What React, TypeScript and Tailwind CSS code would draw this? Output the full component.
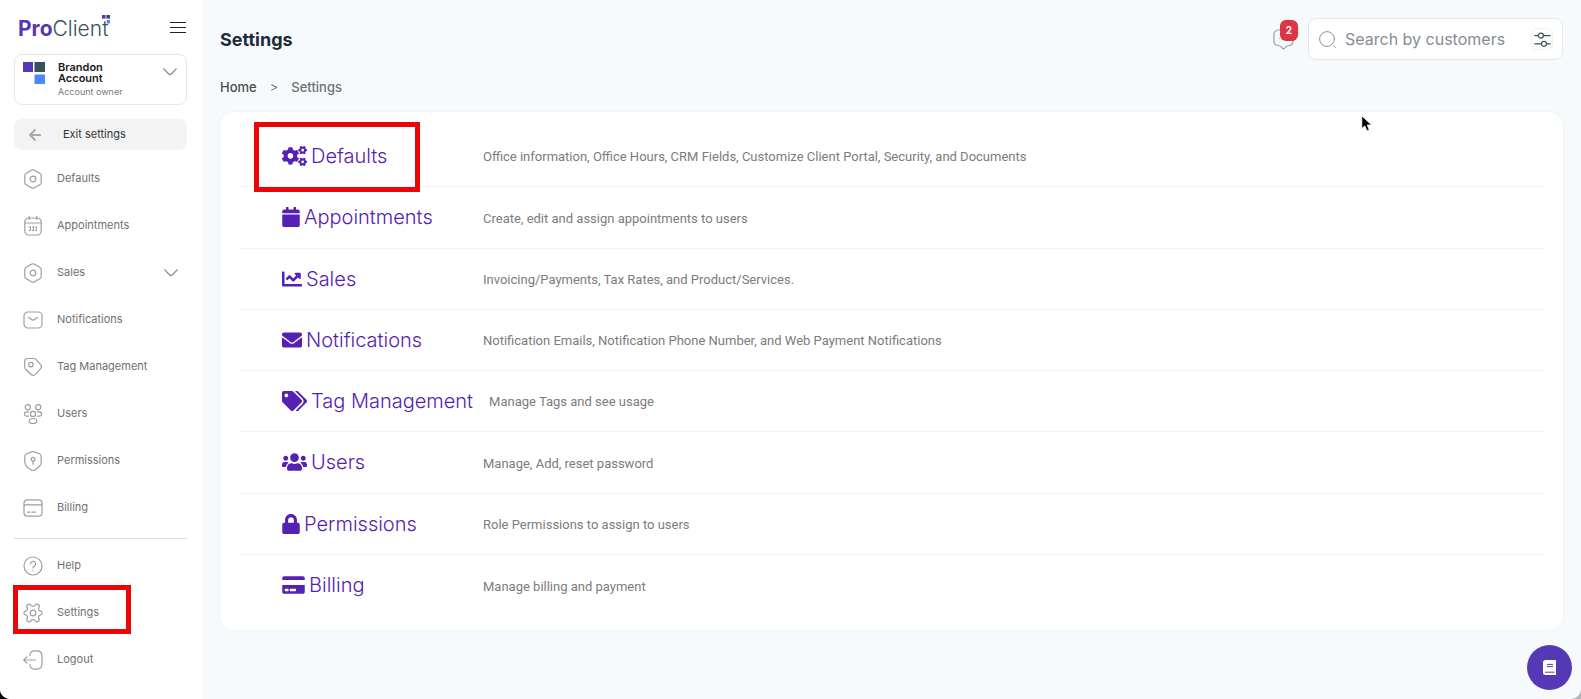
import React from 'react';
import {
  FaCogs,
  FaCalendar,
  FaChartLine,
  FaEnvelope,
  FaTags,
  FaUsers,
  FaLock,
  FaCreditCard,
} from 'react-icons/fa';
import type { IconType } from 'react-icons';
import { clsx } from 'clsx';

interface NavItem {
  label: string;
  icon: React.ReactNode;
  expandable?: boolean;
  highlighted?: boolean;
}

interface SettingRow {
  label: string;
  description: string;
  icon: IconType;
  iconWidth: string;
  highlighted?: boolean;
}

const LineIcon: React.FC<{ children: React.ReactNode }> = ({ children }) => (
  <svg
    viewBox="0 0 20 20"
    className="w-5 h-5 shrink-0"
    fill="none"
    stroke="currentColor"
    strokeWidth="1.2"
    strokeLinecap="round"
    strokeLinejoin="round"
    aria-hidden="true"
  >
    {children}
  </svg>
);

const HexagonIcon = () => (
  <LineIcon>
    <path d="M8.9 1.1a2.2 2.2 0 0 1 2.2 0l6 3.4a2 2 0 0 1 1.1 1.8v7.4a2 2 0 0 1-1.1 1.8l-6 3.4a2.2 2.2 0 0 1-2.2 0l-6-3.4a2 2 0 0 1-1.1-1.8V6.3a2 2 0 0 1 1.1-1.8z" />
    <circle cx="10" cy="10" r="2.8" />
  </LineIcon>
);

const CalendarIcon = () => (
  <LineIcon>
    <path d="M5.5 2h9a3.7 3.7 0 0 1 3.7 3.7V15a4 4 0 0 1-4 4H5.8a4 4 0 0 1-4-4V5.7A3.7 3.7 0 0 1 5.5 2zM1.8 7h16.4M6.2.5v3M13.8.5v3" />
    <path d="M6 11h1.5M6 14.5h1.5M9.3 11h1.5M9.3 14.5h1.5M12.7 11h1M12.7 14.5h1M7.5 11v3.5M10.5 11v3.5M13.3 11v3.5" strokeWidth="1" />
  </LineIcon>
);

const MailIcon = () => (
  <LineIcon>
    <rect x="1" y="2" width="18" height="16" rx="4" />
    <path d="M5.5 7.3l3 2.3a2.5 2.5 0 0 0 3 0l3-2.3" />
  </LineIcon>
);

const TagIcon = () => (
  <LineIcon>
    <path d="M1.7 4.2a2.8 2.8 0 0 1 2.8-2.7h6.3a3 3 0 0 1 2.1.9l4.700 5.200a3 3 0 0 1 0 4l-5.200 5.800a3 3 0 0 1-4.300.1l-5.500-5.300a3 3 0 0 1-.9-2.100z" />
    <circle cx="7.9" cy="7.6" r="2.3" />
  </LineIcon>
);

const PeopleIcon = () => (
  <LineIcon>
    <circle cx="4.8" cy="3.3" r="2.6" />
    <circle cx="15.2" cy="3.3" r="2.6" />
    <circle cx="10" cy="9.9" r="2.6" />
    <ellipse cx="10" cy="17" rx="3.8" ry="2.5" />
    <path d="M5.7 7.8H3.6a2.2 2.2 0 0 0 0 4.4h2.1M14.3 7.8h2.1a2.2 2.2 0 0 1 0 4.4h-2.1" />
  </LineIcon>
);

const ShieldIcon = () => (
  <LineIcon>
    <path d="M8.8.9a3 3 0 0 1 2.4 0l5.2 1.9a2.8 2.8 0 0 1 1.8 2.6V11c0 2.9-1.7 4.7-3.9 6.3l-2.5 1.7a3 3 0 0 1-3.6 0l-2.5-1.7C3.5 15.7 1.8 13.9 1.8 11V5.4a2.8 2.8 0 0 1 1.8-2.6z" />
    <circle cx="10" cy="8.3" r="1.9" />
    <path d="M10 10.3v3.2" />
  </LineIcon>
);

const CardIcon = () => (
  <LineIcon>
    <rect x="1" y="1.8" width="18" height="16.4" rx="3.5" />
    <path d="M1 6.8h18M4.5 14.2h2.5M9 14.2h3.5" />
  </LineIcon>
);

const HelpIcon = () => (
  <LineIcon>
    <circle cx="10" cy="10" r="9" />
    <path d="M7.4 8a2.6 2.6 0 1 1 3.9 2.3c-.8.5-1.3.9-1.3 1.8M10 14.5v.2" />
  </LineIcon>
);

const GearIcon = () => (
  <LineIcon>
    <path d="M7.9 2.3c.9 1.5 3.3 1.5 4.2 0 .7-1.2 1.9-1.5 3-.8 1.3.8 1.5 1.9.8 3.1-.9 1.6 0 3.4 1.6 3.5 1.1.1 1.6.8 1.6 1.9s-.5 1.8-1.6 1.9c-1.6.1-2.5 1.9-1.6 3.5.7 1.2.5 2.3-.8 3.1-1.1.7-2.3.4-3-.8-.9-1.5-3.3-1.5-4.2 0-.7 1.2-1.9 1.5-3 .8-1.3-.8-1.5-1.9-.8-3.1.9-1.6 0-3.4-1.6-3.5C1.400 11.800.9 11.100.9 10s.5-1.800 1.600-1.900C4.100 8 5 6.200 4.100 4.600c-.7-1.200-.5-2.300.8-3.100 1.100-.7 2.300-.4 3 .8z" />
    <circle cx="10" cy="10" r="2.9" />
  </LineIcon>
);

const LogoutIcon = () => (
  <LineIcon>
    <path d="M7 5.5C7 2.8 8.4.9 11.5.9h2.2c3.4 0 5.3 1.9 5.3 5.3v7.6c0 3.4-1.9 5.3-5.3 5.3h-2.2C8.4 19.1 7 17.2 7 14.5M12.5 10H.9M3.9 6.9L.8 10l3.1 3.1" />
  </LineIcon>
);

const ChevronDown = () => (
  <svg viewBox="0 0 14 8" className="w-3.5 h-2 shrink-0" fill="none" stroke="currentColor" strokeWidth="1.2" aria-hidden="true">
    <path d="M.8.8l5 5.2a1.7 1.7 0 0 0 2.4 0l5-5.2" strokeLinecap="round" />
  </svg>
);

const mainNav: NavItem[] = [
  { label: 'Defaults', icon: <HexagonIcon /> },
  { label: 'Appointments', icon: <CalendarIcon /> },
  { label: 'Sales', icon: <HexagonIcon />, expandable: true },
  { label: 'Notifications', icon: <MailIcon /> },
  { label: 'Tag Management', icon: <TagIcon /> },
  { label: 'Users', icon: <PeopleIcon /> },
  { label: 'Permissions', icon: <ShieldIcon /> },
  { label: 'Billing', icon: <CardIcon /> },
];

const footerNav: NavItem[] = [
  { label: 'Help', icon: <HelpIcon /> },
  { label: 'Settings', icon: <GearIcon />, highlighted: true },
  { label: 'Logout', icon: <LogoutIcon /> },
];

const settings: SettingRow[] = [
  {
    label: 'Defaults',
    description: 'Office information, Office Hours, CRM Fields, Customize Client Portal, Security, and Documents',
    icon: FaCogs,
    iconWidth: 'w-[25px]',
    highlighted: true,
  },
  {
    label: 'Appointments',
    description: 'Create, edit and assign appointments to users',
    icon: FaCalendar,
    iconWidth: 'w-[18px]',
  },
  {
    label: 'Sales',
    description: 'Invoicing/Payments, Tax Rates, and Product/Services.',
    icon: FaChartLine,
    iconWidth: 'w-5',
  },
  {
    label: 'Notifications',
    description: 'Notification Emails, Notification Phone Number, and Web Payment Notifications',
    icon: FaEnvelope,
    iconWidth: 'w-5',
  },
  { label: 'Tag Management', description: 'Manage Tags and see usage', icon: FaTags, iconWidth: 'w-[25px]' },
  { label: 'Users', description: 'Manage, Add, reset password', icon: FaUsers, iconWidth: 'w-[25px]' },
  { label: 'Permissions', description: 'Role Permissions to assign to users', icon: FaLock, iconWidth: 'w-[18px]' },
  { label: 'Billing', description: 'Manage billing and payment', icon: FaCreditCard, iconWidth: 'w-[23px]' },
];

const NavList: React.FC<{ items: NavItem[] }> = ({ items }) => (
  <ul>
    {items.map((item) => (
      <li key={item.label} className="relative">
        <a href="#" className="flex items-center h-[47px] px-[9px] text-[11px] text-[#6f6f76]">
          <span className="text-[#9d9da8]">{item.icon}</span>
          <span className="ml-3.5 flex-1">{item.label}</span>
          {item.expandable && <span className="text-[#85858d]"><ChevronDown /></span>}
        </a>
        {item.highlighted && (
          <div className="absolute -left-px -top-1 w-[118px] h-[49px] border-5 border-[#ea0606] pointer-events-none" />
        )}
      </li>
    ))}
  </ul>
);

const Logo = () => (
  <a href="#" className="relative flex mt-1 text-[21px] leading-6 text-[#37505d]">
    <span className="font-bold text-[#5538b5]">Pro</span>
    <span className="font-light">Client</span>
    <svg viewBox="0 0 8 9" className="absolute -right-0.5 -top-0.5 w-2 h-[9px]" aria-hidden="true">
      <path d="M0 0h3.6v3.6H0z" fill="#5538b5" />
      <path d="M4.4 0H8v3.6H4.4z" fill="#37505d" />
      <path d="M4.8 5H8v3.5H4.8z" fill="#4a88ff" />
    </svg>
  </a>
);

const Sidebar = () => (
  <aside className="w-[202px] shrink-0 bg-white pl-3.5 pr-[15px] pb-4">
    <div className="flex items-center justify-between h-[54px] pl-1">
      <Logo />
      <button type="button" aria-label="Toggle menu" className="flex flex-col gap-1 pr-px">
        <span className="block w-4 h-px bg-[#222]" />
        <span className="block w-4 h-px bg-[#222]" />
        <span className="block w-4 h-px bg-[#222]" />
      </button>
    </div>

    <button type="button" className="flex items-start w-full h-[51px] rounded-lg border border-[#e6e6ea] pl-2 pr-[9px] pt-[7px] text-left">
      <svg viewBox="0 0 22 22" className="w-[22px] h-[22px] shrink-0" aria-hidden="true">
        <path d="M0 0h10v10H0z" fill="#5538b5" />
        <path d="M11.5 0H22v10H11.5z" fill="#37505d" />
        <path d="M11.5 12.500H22V22H11.5z" fill="#4a88ff" />
      </svg>
      <span className="ml-[13px] flex-1">
        <span className="block w-16 text-[11px] leading-[11px] font-semibold text-[#1c1c1c]">Brandon Account</span>
        <span className="block mt-0.5 text-[9px] leading-3 text-[#77777d]">Account owner</span>
      </span>
      <span className="mt-1.5 text-[#85858d]"><ChevronDown /></span>
    </button>

    <button type="button" className="flex items-center w-full h-[31px] mt-3.5 rounded-lg bg-[#f3f3f3] pl-[15px] text-[11px] text-[#333]">
      <svg viewBox="0 0 12 12" className="w-3 h-3" fill="none" stroke="#a8a8a8" strokeWidth="1.8" strokeLinecap="round" strokeLinejoin="round" aria-hidden="true">
        <path d="M6 1L1 6l5 5M1 6h10.5" />
      </svg>
      <span className="ml-[22px]">Exit settings</span>
    </button>

    <nav className="mt-[5px]">
      <NavList items={mainNav} />
      <hr className="mt-[7px] mb-[3px] border-t border-[#dcdcdf]" />
      <NavList items={footerNav} />
    </nav>
  </aside>
);

const SearchBox = () => (
  <div className="flex items-center w-[255px] h-[42px] rounded-lg border border-[#e3e6ea] bg-white pl-2.5 pr-[9px]">
    <svg viewBox="0 0 17 17" className="w-[17px] h-[17px] shrink-0" fill="none" stroke="#8d939c" strokeWidth="1" strokeLinecap="round" aria-hidden="true">
      <circle cx="8" cy="8" r="7.4" />
      <path d="M14.6 14.6l1.8 1.8" />
    </svg>
    <input
      type="text"
      aria-label="Search by customers"
      placeholder="Search by customers"
      className="flex-1 min-w-0 ml-[9px] bg-transparent text-base text-[#222] placeholder:text-[#858c96] outline-none"
    />
    <button type="button" aria-label="Filters" className="flex items-center justify-center w-[22px] h-[22px] rounded-md border border-[#f0f1f3]">
      <svg viewBox="0 0 17 15" className="w-[17px] h-[15px] shrink-0" fill="none" stroke="#37505d" strokeWidth="1.2" strokeLinecap="round" aria-hidden="true">
        <path d="M.8 3.6h3.5M9.6 3.6h6.6M.8 11.8h6.3M12.8 11.8h3.4" />
        <circle cx="6.9" cy="3.6" r="2.5" />
        <circle cx="10" cy="11.8" r="2.5" />
      </svg>
    </button>
  </div>
);

const App: React.FC = () => {
  return (
    <div className="min-h-screen flex bg-linear-to-r from-black to-[#b5b8bb] font-['Inter',sans-serif]">
      <div className="relative flex flex-1 min-w-0 rounded-b-[10px] overflow-hidden bg-[#f6fafd]">
        <Sidebar />

        <main className="flex-1 min-w-0 px-[18px] pt-[18px]">
          <header className="flex items-center justify-between">
            <h1 className="pt-0.5 text-lg font-bold text-[#1d2b3a]">Settings</h1>
            <div className="flex items-center gap-3.5">
              <button type="button" aria-label="Messages, 2 unread" className="relative">
                <svg viewBox="0 0 21 21" className="w-[21px] h-[21px]" fill="none" stroke="#9b9ca6" strokeWidth="1.2" strokeLinejoin="round" aria-hidden="true">
                  <path d="M5.5 1h10a4.6 4.6 0 0 1 4.6 4.6V12a4.6 4.6 0 0 1-4.2 4.5c-1.6.2-2.6.6-3.5 1.7l-1 1.3a1.2 1.2 0 0 1-1.8 0l-1-1.3c-.9-1.1-1.9-1.5-3.5-1.7A4.6 4.6 0 0 1 .9 12V5.6A4.6 4.6 0 0 1 5.5 1z" />
                  <path d="M6 9.5h.8M10.2 9.5h.8M14.3 9.5h.8" />
                </svg>
                <span className="absolute left-[7px] -top-[9px] flex items-center justify-center w-[18px] h-[21px] rounded-md bg-[#dc3545] text-[10px] font-bold text-white">
                  2
                </span>
              </button>
              <SearchBox />
            </div>
          </header>

          <nav aria-label="Breadcrumb" className="flex items-center gap-[13px] h-5 mt-[18px] text-[13px] font-medium">
            <a href="#" className="text-[#4b4d52]">Home</a>
            <span className="font-normal text-[#77797e]">&gt;</span>
            <span className="text-[#6f7175]">Settings</span>
          </nav>

          <ul className="grid auto-rows-fr min-h-[518px] mt-3.5 px-5 py-3.5 rounded-[14px] bg-white shadow-[0_0_2px_1px_#f1f3f5]">
            {settings.map(({ label, description, icon: Icon, iconWidth, highlighted }) => (
              <li
                key={label}
                className="relative flex items-center pl-[42px] border-b border-[#f2f2f4] last:border-b-0"
              >
                <a href="#" className="flex items-center gap-1 min-w-[185px] mr-4 text-[20px] font-light text-[#5521b5]">
                  <Icon className={clsx('h-5 shrink-0', iconWidth)} />
                  {label}
                </a>
                <p className="pt-0.5 font-['Roboto',sans-serif] text-[13px] text-[#7c7c7c]">{description}</p>
                {highlighted && (
                  <div className="absolute left-3.5 -top-1 w-[166px] h-[70px] border-5 border-[#ea0606] pointer-events-none" />
                )}
              </li>
            ))}
          </ul>
        </main>

        <button
          type="button"
          aria-label="Open knowledge base"
          className="absolute right-[9px] bottom-[9px] flex items-center justify-center w-[45px] h-[45px] rounded-full bg-[#5538b5]"
        >
          <svg viewBox="0 0 13 15" className="w-[13px] h-[15px]" aria-hidden="true">
            <path d="M2.5 0H13v15H2.5A2.5 2.5 0 0 1 0 12.5v-10A2.5 2.5 0 0 1 2.5 0z" fill="#fff" />
            <path d="M4 4.400h6M4 6.600h6M2 12.200h9.500" stroke="#5538b5" strokeWidth="1" />
          </svg>
        </button>

        {/* mouse pointer */}
        <svg viewBox="0 0 12 18" className="absolute right-[208px] top-[115px] w-3 h-[18px] pointer-events-none" aria-hidden="true">
          <path d="M.8.8v12.8l3-2.7 2.1 5 2.4-1-2.1-4.9h4.3z" fill="#000" stroke="#fff" strokeWidth=".8" />
        </svg>
      </div>
    </div>
  );
};

export default App;
